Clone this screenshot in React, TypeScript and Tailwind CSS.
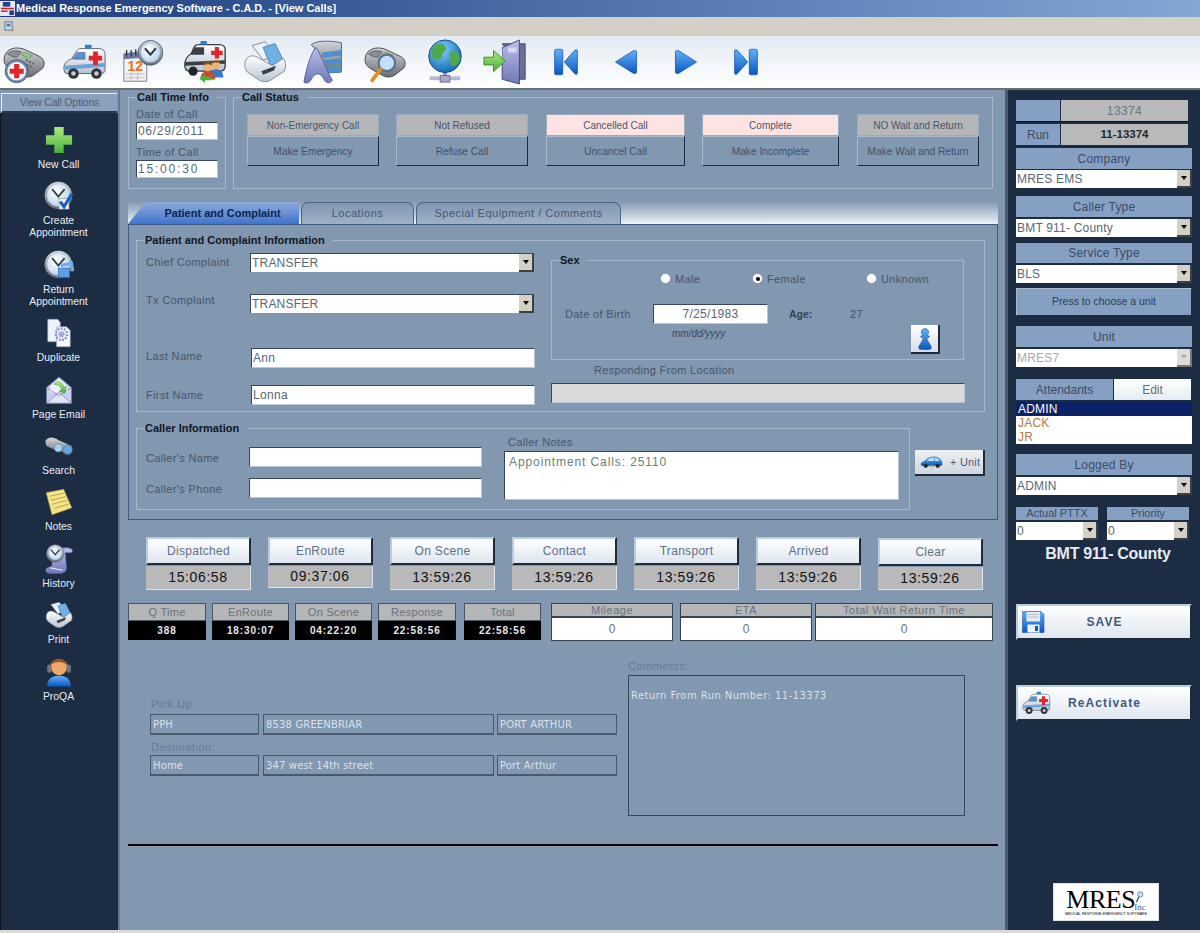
// App.tsx - MRES C.A.D. "View Calls" form
import React from 'react';

const SUNKEN = 'border border-t-[#39465a] border-l-[#39465a] border-r-[#b9c6d6] border-b-[#b9c6d6]';
const RAISED_DARK = 'border border-t-[#a9bacd] border-l-[#a9bacd] border-r-[#1d2a3c] border-b-[#1d2a3c]';
const RAISED_WHITE = 'border-2 border-t-[#b9cbe0] border-l-[#b9cbe0] border-r-[#1d2a3c] border-b-[#1d2a3c]';
const LABEL = 'text-[11px] leading-[12px] text-[#46566b] tracking-[0.35px] whitespace-nowrap';
const HEADER = 'bg-[#86a0c3] flex items-center justify-center text-[12px] text-[#3a4c66] tracking-[0.2px] border-b border-[#1b2c43]';

function Svg({ className, children }: { className?: string; children: React.ReactNode }) {
  return (
    <svg viewBox="0 0 48 48" className={className}>
      {children}
    </svg>
  );
}

function Defs() {
  return (
    <svg width="0" height="0" className="absolute">
      <defs>
        <linearGradient id="gBlue" x1="0" y1="0" x2="0" y2="1">
          <stop offset="0" stopColor="#63b1f5" />
          <stop offset="1" stopColor="#0a57c2" />
        </linearGradient>
        <linearGradient id="gGray" x1="0" y1="0" x2="0" y2="1">
          <stop offset="0" stopColor="#d2d5d9" />
          <stop offset="1" stopColor="#6a6e74" />
        </linearGradient>
        <linearGradient id="gWhite" x1="0" y1="0" x2="0" y2="1">
          <stop offset="0" stopColor="#ffffff" />
          <stop offset="1" stopColor="#b8c3d2" />
        </linearGradient>
        <linearGradient id="gGreen" x1="0" y1="0" x2="0" y2="1">
          <stop offset="0" stopColor="#a8ec7c" />
          <stop offset="1" stopColor="#4cae3c" />
        </linearGradient>
        <linearGradient id="gPurple" x1="0" y1="0" x2="0" y2="1">
          <stop offset="0" stopColor="#b9bfe8" />
          <stop offset="1" stopColor="#7078b8" />
        </linearGradient>
        <radialGradient id="gGlobe" cx="0.4" cy="0.3" r="0.8">
          <stop offset="0" stopColor="#7fd0f8" />
          <stop offset="1" stopColor="#0b5fb0" />
        </radialGradient>
        <radialGradient id="gFace" cx="0.4" cy="0.35" r="0.8">
          <stop offset="0" stopColor="#ffffff" />
          <stop offset="1" stopColor="#a9cdea" />
        </radialGradient>
      </defs>
    </svg>
  );
}

function Cross({ x, y, s = 1 }: { x: number; y: number; s?: number }) {
  return (
    <path
      transform={`translate(${x} ${y}) scale(${s})`}
      d="M-2.5 -7H2.5V-2.5H7V2.5H2.5V7H-2.5V2.5H-7V-2.5H-2.5Z"
      fill="#e0262a"
    />
  );
}

function PhoneBody() {
  return (
    <>
      <path d="M3 17C6 9 15 7 24 10L41 18C47 21 47 28 44 31L35 38C31 41 26 41 22 39L8 31C3 28 1 23 3 17Z" fill="url(#gGray)" stroke="#3e4248" />
      <path d="M6 15C10 11 16 11 21 13L16 19C12 18 9 18 6 15Z" fill="#8b8f95" stroke="#3e4248" strokeWidth="0.7" />
      <path d="M24 13L33 17L29 20L21 16Z" fill="#8fcf87" stroke="#4d6b4a" strokeWidth="0.6" />
      <path d="M26 22L37 27M23 25L34 30M20 28L31 33" stroke="#55595f" strokeWidth="2" strokeDasharray="2 2" />
    </>
  );
}

function PhoneCross({ className }: { className?: string }) {
  return (
    <Svg className={className}>
      <PhoneBody />
      <circle cx="16" cy="34" r="12.5" fill="#6f8fb4" stroke="#3f5a7c" />
      <circle cx="16" cy="34" r="10" fill="#f4f6f8" />
      <Cross x={16} y={34} s={1.1} />
    </Svg>
  );
}

function Ambulance({ className }: { className?: string }) {
  return (
    <Svg className={className}>
      <path d="M3 30C3 25 7 22 11 21L16 13C17 11 19 10 21 10H40C44 10 46 13 46 16V32C46 35 44 36 42 36H6C4 36 3 34 3 30Z" fill="url(#gWhite)" stroke="#5a6675" />
      <path d="M12 21L17 14H25V21Z" fill="#5b92cc" stroke="#3c5f86" strokeWidth="0.6" />
      <path d="M4 28L46 25V29L4 32Z" fill="#6aa3dc" />
      <rect x="25" y="6" width="7" height="4" rx="1" fill="#2f7fd8" />
      <Cross x={36} y={20} s={1} />
      <circle cx="13" cy="36" r="5.5" fill="#30343a" />
      <circle cx="13" cy="36" r="2.4" fill="#c8ccd2" />
      <circle cx="37" cy="36" r="5.5" fill="#30343a" />
      <circle cx="37" cy="36" r="2.4" fill="#c8ccd2" />
    </Svg>
  );
}

function CalendarClock({ className }: { className?: string }) {
  return (
    <Svg className={className}>
      <path d="M2 15L27 12V45H2Z" fill="#f3f2ee" stroke="#6f7aa8" />
      <path d="M2 15L27 12V19L2 21Z" fill="#6f7aa8" />
      <path d="M5 11V18M10 11V18M15 10V17M20 10V17" stroke="#33383f" strokeWidth="1.5" />
      <text x="6" y="34" fontSize="15" fontWeight="700" fill="#e8731c" fontFamily="Liberation Sans, sans-serif">12</text>
      <path d="M4 37H25M4 41H25M10 36V45M17 36V45" stroke="#a7aed0" strokeWidth="0.8" />
      <circle cx="31" cy="14" r="13.5" fill="url(#gGray)" stroke="#4a5f78" />
      <circle cx="31" cy="14" r="10.5" fill="url(#gFace)" />
      <path d="M25 9L31 16L37 9" fill="none" stroke="#343a42" strokeWidth="2.2" />
    </Svg>
  );
}

function Person({ x, y, c }: { x: number; y: number; c: string }) {
  return (
    <g transform={`translate(${x} ${y})`}>
      <path d="M-8 14C-8 7 -4 5 0 5S8 7 8 14Z" fill={c} />
      <circle cx="0" cy="0" r="5" fill="#efb47a" />
      <path d="M-5 -1C-5 -6 5 -6 5 -1C2 -3 -2 -3 -5 -1Z" fill="#7a4a1e" />
    </g>
  );
}

function AmbulancePeople({ className }: { className?: string }) {
  return (
    <Svg className={className}>
      <path d="M2 28C2 20 5 17 9 15L12 8C13 6 15 5 17 5H40C44 5 46 8 46 11V28C46 32 44 34 40 34H8C4 34 2 32 2 28Z" fill="url(#gWhite)" stroke="#3a4048" strokeWidth="1.5" />
      <path d="M8 16L13 8H23V16Z" fill="#3e3f45" />
      <rect x="19" y="1" width="7" height="4" rx="1" fill="#2f7fd8" />
      <Cross x={37} y={14} s={0.9} />
      <path d="M2 24L46 22V26L2 28Z" fill="#3a3d44" />
      <circle cx="11" cy="34" r="5" fill="#22252a" />
      <Person x={36} y={27} c="#3b78c8" />
      <Person x={27} y={29} c="#d2481f" />
      <path d="M18 42L24 37V40H31V44H24V47Z" fill="#48b23c" />
    </Svg>
  );
}

function Printer({ className }: { className?: string }) {
  return (
    <Svg className={className}>
      <path d="M10 6L24 2L38 16L22 22Z" fill="#eaf2fb" stroke="#7a8896" />
      <path d="M22 8L35 4L44 22L30 28Z" fill="#6fb1e6" stroke="#4c7fae" />
      <path d="M3 22C6 16 12 16 18 20L32 28L44 20C47 24 47 31 45 34L30 44C26 46 22 46 18 44L6 36C2 33 1 27 3 22Z" fill="url(#gWhite)" stroke="#7a8896" />
      <path d="M20 34L36 28L34 33L22 38Z" fill="#3b3f46" />
    </Svg>
  );
}

function Server({ className }: { className?: string }) {
  return (
    <Svg className={className}>
      <path d="M9 5C14 1 26 0 42 3V35L26 36L18 16Z" fill="url(#gGray)" stroke="#555c70" />
      <path d="M20 14L42 11V17L22 19ZM23 22L42 20V26L25 27ZM25 30L42 29V35L26 36Z" fill="#4d8fd0" />
      <path d="M14 8C20 16 25 32 32 44C29 48 25 47 23 43C21 39 19 37 16 37C13 37 10 40 9 43C7 47 3 48 1 46C4 30 8 16 14 8Z" fill="url(#gPurple)" stroke="#555c90" />
    </Svg>
  );
}

function PhoneSearch({ className }: { className?: string }) {
  return (
    <Svg className={className}>
      <PhoneBody />
      <circle cx="26" cy="25" r="9" fill="#bfe0f6" stroke="#5d6f84" strokeWidth="2.4" />
      <path d="M19 32L10 44" stroke="#e78a1e" strokeWidth="4" strokeLinecap="round" />
    </Svg>
  );
}

function Globe({ className }: { className?: string }) {
  return (
    <Svg className={className}>
      <path d="M24 32V40" stroke="#8e93b0" strokeWidth="4" />
      <path d="M8 41H40" stroke="#b5b9d2" strokeWidth="4" />
      <rect x="19" y="38" width="10" height="7" fill="#a5a9c6" stroke="#6d7190" />
      <circle cx="24" cy="18" r="17" fill="url(#gGlobe)" stroke="#0b4a87" />
      <path d="M14 6C18 4 24 5 25 9C26 13 21 13 21 17C21 21 16 23 12 20C9 18 9 10 14 6Z" fill="#4ea94a" />
      <path d="M30 14C34 12 40 15 40 20C40 25 34 30 31 28C28 26 31 22 29 19C28 17 28 15 30 14Z" fill="#4ea94a" />
    </Svg>
  );
}

function DoorArrow({ className }: { className?: string }) {
  return (
    <Svg className={className}>
      <path d="M20 5H44V42H38V10H24Z" fill="#6a6f96" stroke="#454a70" />
      <path d="M20 9L38 1V47L20 42Z" fill="url(#gPurple)" stroke="#454a70" />
      <rect x="26" y="9" width="9" height="5" fill="#d6dbf2" />
      <path d="M20 10L10 12V24L20 22Z" fill="#dbe9f6" />
      <path d="M1 19H11V12L23 23L11 34V27H1Z" fill="url(#gGreen)" stroke="#3f8a30" />
    </Svg>
  );
}

function Nav({ kind, className }: { kind: 'first' | 'prev' | 'next' | 'last'; className?: string }) {
  const d = {
    first: 'M2 5C2 3 12 3 12 5V43C12 45 2 45 2 43ZM14 24L27 5C28 4 30 4 30 6V42C30 44 28 44 27 43Z',
    prev: 'M3 24L25 6C27 5 29 6 29 8V40C29 42 27 43 25 42Z',
    next: 'M29 24L7 6C5 5 3 6 3 8V40C3 42 5 43 7 42Z',
    last: 'M30 5C30 3 20 3 20 5V43C20 45 30 45 30 43ZM18 24L5 5C4 4 2 4 2 6V42C2 44 4 44 5 43Z',
  }[kind];
  return (
    <svg viewBox="0 0 32 48" preserveAspectRatio="none" className={className}>
      <path d={d} fill="url(#gBlue)" stroke="#0b4ea8" strokeWidth="1" />
    </svg>
  );
}

function ClockBadge({ className, mode }: { className?: string; mode: 'check' | 'return' }) {
  return (
    <Svg className={className}>
      <circle cx="23" cy="23" r="22" fill="url(#gGray)" />
      <circle cx="23" cy="23" r="18" fill="url(#gFace)" />
      <path d="M13 13L23 25L33 13" fill="none" stroke="#3a4048" strokeWidth="3" />
      {mode === 'check' ? (
        <>
          <rect x="24" y="28" width="16" height="17" fill="#f5f7fb" stroke="#7b8aa8" />
          <path d="M26 33L32 41L45 20" fill="none" stroke="#1a5cc0" strokeWidth="5" />
        </>
      ) : (
        <>
          <rect x="23" y="29" width="18" height="15" fill="#5a9ee8" stroke="#2a62b0" />
          <path d="M27 25L44 21L46 34" fill="none" stroke="#6aaef0" strokeWidth="5" />
        </>
      )}
    </Svg>
  );
}

function Duplicate({ className }: { className?: string }) {
  return (
    <Svg className={className}>
      <path d="M6 2H22L26 7V38H6Z" fill="#eef2fb" stroke="#8e9ab8" />
      <path d="M20 14H36L42 20V46H20Z" fill="#f8faff" stroke="#8e9ab8" />
      <circle cx="28" cy="26" r="9" fill="none" stroke="#8d92d0" strokeWidth="4" strokeDasharray="3 2" />
      <circle cx="28" cy="26" r="5" fill="#a8acdc" />
    </Svg>
  );
}

function Mail({ className }: { className?: string }) {
  return (
    <Svg className={className}>
      <path d="M4 20L24 3L44 20V45H4Z" fill="#c9cdf0" stroke="#6f74b0" />
      <path d="M10 18L24 6L38 18V28H10Z" fill="#eef1fb" />
      <path d="M16 15C20 8 30 10 32 20L36 18L34 29L24 26L28 23C27 17 21 15 16 15Z" fill="url(#gGreen)" stroke="#3f8a30" strokeWidth="0.7" />
      <path d="M4 45L24 28L44 45Z" fill="#e2e5f8" stroke="#6f74b0" />
      <path d="M4 20L24 33L44 20" fill="none" stroke="#6f74b0" />
    </Svg>
  );
}

function Binoculars({ className }: { className?: string }) {
  return (
    <Svg className={className}>
      <path d="M2 16C8 8 16 10 22 14L44 24C47 30 45 38 38 38C33 38 30 34 28 31L24 28C20 30 16 30 13 28L4 24Z" fill="url(#gGray)" />
      <circle cx="23" cy="27" r="6.5" fill="#9dd0f6" stroke="#65727f" />
      <circle cx="38" cy="30" r="7" fill="#5aa8ec" stroke="#65727f" />
    </Svg>
  );
}

function Notes({ className }: { className?: string }) {
  return (
    <Svg className={className}>
      <path d="M2 8L32 2L46 34L12 46Z" fill="#f4e58c" stroke="#a8953a" />
      <path d="M8 14L33 9M10 21L36 15M12 28L39 21M15 35L42 27" stroke="#b9a447" strokeWidth="1.6" />
    </Svg>
  );
}

function History({ className }: { className?: string }) {
  return (
    <Svg className={className}>
      <path d="M16 14C20 6 38 4 44 8C47 10 45 15 42 14L34 14L36 38C36 44 32 47 26 47H8C3 47 1 41 5 38L12 36Z" fill="url(#gPurple)" stroke="#5c60a0" />
      <path d="M9 38L30 42" stroke="#eef0fb" strokeWidth="2" />
      <circle cx="18" cy="15" r="14" fill="url(#gGray)" stroke="#5b6a80" />
      <circle cx="18" cy="15" r="10.5" fill="url(#gFace)" />
      <path d="M11 9L18 17L25 9" fill="none" stroke="#3a4048" strokeWidth="2.4" />
    </Svg>
  );
}

function Headset({ className }: { className?: string }) {
  return (
    <Svg className={className}>
      <path d="M5 47C5 34 14 30 24 30S43 34 43 47Z" fill="url(#gBlue)" />
      <circle cx="24" cy="16" r="13" fill="#f0a768" />
      <path d="M10 14C10 0 38 0 38 14C32 6 16 6 10 14Z" fill="#8a5a28" />
      <rect x="5" y="12" width="7" height="13" rx="3" fill="#70747c" />
      <rect x="36" y="12" width="7" height="13" rx="3" fill="#70747c" />
    </Svg>
  );
}

function Floppy({ className }: { className?: string }) {
  return (
    <Svg className={className}>
      <path d="M3 3H40L46 9V45H3Z" fill="url(#gBlue)" stroke="#0d3f8a" />
      <rect x="11" y="4" width="27" height="19" fill="#e6e9ef" />
      <path d="M14 9H35M14 14H35" stroke="#aab1bd" strokeWidth="1.5" />
      <rect x="13" y="29" width="24" height="16" fill="#eef0f4" />
      <rect x="28" y="32" width="6" height="10" fill="#1c56ad" />
    </Svg>
  );
}

function Car({ className }: { className?: string }) {
  return (
    <svg viewBox="0 0 48 28" className={className}>
      <path d="M2 19C2 15 6 13 10 12C15 6 20 3 29 3C38 3 44 8 46 15C47 19 46 22 43 22H5C3 22 2 21 2 19Z" fill="url(#gBlue)" stroke="#0b4ea8" strokeWidth="0.7" />
      <path d="M14 12C18 7 23 5 29 5V12ZM31 5C36 5 39 8 41 12H31Z" fill="#bfe0f8" />
      <circle cx="12" cy="22" r="4.5" fill="#24282e" />
      <circle cx="37" cy="22" r="4.5" fill="#24282e" />
      <rect x="22" y="20" width="4" height="6" fill="#e2a21c" />
    </svg>
  );
}

function Pawn({ className }: { className?: string }) {
  return (
    <svg viewBox="0 0 24 36" className={className}>
      <path d="M12 1C16 1 18 4 18 7C18 10 16 11 15 12L19 13V15L15 16C16 22 20 26 22 30V34C18 36 6 36 2 34V30C4 26 8 22 9 16L5 15V13L9 12C8 11 6 10 6 7C6 4 8 1 12 1Z" fill="url(#gBlue)" stroke="#0b3f8e" strokeWidth="0.8" />
    </svg>
  );
}

function Arrow({ dim }: { dim?: boolean }) {
  return (
    <span className={`flex w-[15px] h-full shrink-0 items-center justify-center bg-[#d4d0c8] border-r-2 border-b-2 border-[#3c3f44] ${dim ? 'opacity-70' : ''}`}>
      <span className={`w-0 h-0 border-x-[3px] border-x-transparent border-t-[4px] ${dim ? 'border-t-[#8a8a8a]' : 'border-t-black'}`} />
    </span>
  );
}

function Dropdown({ value, className, dim }: { value: string; className?: string; dim?: boolean }) {
  return (
    <div className={`flex items-center bg-white h-[18px] ${className ?? ''}`}>
      <span className={`flex-1 pl-[1px] text-[12px] tracking-[0.2px] whitespace-nowrap overflow-hidden ${dim ? 'text-[#a3a9b2]' : 'text-[#566778]'}`}>{value}</span>
      <Arrow dim={dim} />
    </div>
  );
}

function Field({ value, className }: { value?: string; className?: string }) {
  return (
    <div className={`bg-white ${SUNKEN} flex items-center px-[1px] text-[12px] tracking-[0.3px] text-[#566778] whitespace-nowrap ${className ?? ''}`}>
      {value}
    </div>
  );
}

function Group({ title, className, children }: { title: string; className?: string; children: React.ReactNode }) {
  return (
    <fieldset className={`border border-[#a7b7ca] shrink-0 ${className ?? ''}`}>
      <legend className="ml-[8px] pr-[8px] text-[11px] leading-[12px] font-bold text-[#10161f] whitespace-nowrap">{title}</legend>
      {children}
    </fieldset>
  );
}

function StatusPair({ label, action, pink, className }: { label: string; action: string; pink?: boolean; className?: string }) {
  return (
    <div className={`flex flex-col shrink-0 ${className ?? ''}`}>
      <div className={`h-[22px] flex items-center justify-center text-[10px] text-[#47556a] border border-[#9aabbf] whitespace-nowrap ${pink ? 'bg-[#fde4e2]' : 'bg-[#b5b6b8]'}`}>{label}</div>
      <div className={`h-[30px] pt-[2px] flex items-center justify-center text-[10.2px] text-[#3f526d] bg-[#8297b0] ${RAISED_DARK} whitespace-nowrap`}>{action}</div>
    </div>
  );
}

function SideItem({ label, children }: { label: React.ReactNode; children: React.ReactNode }) {
  return (
    <div className="flex flex-col items-center">
      <div className="h-[30px] flex items-center justify-center">{children}</div>
      <div className="mt-[4px] text-center text-[10.4px] leading-[12px] text-[#e9edf2]">{label}</div>
    </div>
  );
}

function Clock({ label, time, className, timeClass }: { label: string; time: string; className?: string; timeClass?: string }) {
  return (
    <div className={`w-[105px] flex flex-col shrink-0 ${className ?? ''}`}>
      <div className={`h-[28px] flex items-center justify-center bg-gradient-to-b from-white to-[#dfe6ef] text-[12px] text-[#5d7088] tracking-[0.3px] ${RAISED_WHITE}`}>{label}</div>
      <div className={`mt-[1px] flex items-center justify-center bg-[#b9b9b9] border-r border-b border-[#dbe3ec] text-[14px] tracking-[0.6px] text-[#111] ${timeClass ?? 'h-[24px]'}`}>{time}</div>
    </div>
  );
}

function Elapsed({ label, value, className }: { label: string; value: string; className?: string }) {
  return (
    <div className={`flex flex-col shrink-0 ${className ?? ''}`}>
      <div className="h-[18px] flex items-center justify-center bg-[#b5b6b8] border border-[#4a5463] text-[11px] text-[#69727e] tracking-[0.3px]">{label}</div>
      <div className="h-[19px] flex items-center justify-center bg-black text-[10px] font-bold text-[#e8e8e8] tracking-[0.9px]">{value}</div>
    </div>
  );
}

function Stat({ label, value, className }: { label: string; value: string; className?: string }) {
  return (
    <div className={`flex flex-col shrink-0 ${className ?? ''}`}>
      <div className="h-[15px] flex items-center justify-center bg-[#b5b6b8] border border-b-2 border-[#39424f] text-[11px] text-[#69727e] tracking-[0.5px]">{label}</div>
      <div className="h-[23px] flex items-center justify-center bg-white border border-t-0 border-[#39424f] text-[12px] text-[#69727e]">{value}</div>
    </div>
  );
}

function Address({ value, className }: { value: string; className?: string }) {
  return (
    <div className={`h-[21px] flex items-center px-[2px] border border-[#4a5a6e] border-b-2 text-[10px] tracking-[0.15px] text-[#d9e1ea] font-['DejaVu_Sans',sans-serif] whitespace-nowrap ${className ?? ''}`}>
      {value}
    </div>
  );
}

function Radio({ label, checked, className }: { label: string; checked?: boolean; className?: string }) {
  return (
    <div className={`flex items-center gap-[4px] shrink-0 ${className ?? ''}`}>
      <span className="w-[11px] h-[11px] rounded-full bg-white border border-[#8a97a8] flex items-center justify-center">
        {checked && <span className="w-[4px] h-[4px] rounded-full bg-black" />}
      </span>
      <span className={LABEL}>{label}</span>
    </div>
  );
}

function WideButton({ icon, label, className }: { icon: React.ReactNode; label: string; className?: string }) {
  return (
    <div className={`w-[176px] h-[36px] flex items-center bg-gradient-to-b from-white to-[#dfe6ef] ${RAISED_WHITE} ${className ?? ''}`}>
      <div className="w-[30px] flex justify-start ml-[3px] shrink-0">{icon}</div>
      <span className="flex-1 pr-[32px] text-center text-[12px] font-bold tracking-[1.1px] text-[#3f5a7c]">{label}</span>
    </div>
  );
}

export default function App() {
  return (
    <div className="w-[1200px] h-[933px] overflow-hidden flex flex-col bg-[#8297b0] font-['Liberation_Sans',Arial,sans-serif]">
      <Defs />

      {/* title bar */}
      <div className="h-[17px] shrink-0 flex items-center bg-gradient-to-r from-[#1d3b7c] via-[#4f74ad] to-[#83a6d3]">
        <svg viewBox="0 0 16 16" className="w-[15px] h-[15px] shrink-0">
          <rect width="16" height="16" fill="#e8e8f2" />
          <rect x="3" y="1" width="8" height="5" fill="#2b3f8a" />
          <path d="M1 8H15M1 11H8" stroke="#c22" strokeWidth="1.5" />
          <rect x="10" y="10" width="5" height="5" fill="#2b3f8a" />
        </svg>
        <span className="ml-[1px] text-[11px] font-bold tracking-[-0.03px] text-white whitespace-nowrap">Medical Response Emergency Software - C.A.D. - [View Calls]</span>
      </div>

      {/* menu strip */}
      <div className="h-[19px] shrink-0 flex items-center pl-[4px] bg-[#d4d0c8]">
        <svg viewBox="0 0 12 12" className="w-[11px] h-[11px]">
          <rect x="1" y="1" width="8" height="9" fill="#c6d8ee" stroke="#5e7696" />
          <rect x="3" y="3" width="4" height="3" fill="#5e7696" />
          <rect x="8" y="9" width="3" height="2" fill="#e0922a" />
        </svg>
      </div>

      {/* toolbar */}
      <div className="h-[52px] shrink-0 flex items-center pl-[1px] gap-[14.2px] bg-gradient-to-b from-[#e4eaf3] to-white">
        <PhoneCross className="w-[46px] h-[44px] shrink-0" />
        <Ambulance className="w-[46px] h-[46px] shrink-0" />
        <CalendarClock className="w-[46px] h-[44px] shrink-0" />
        <AmbulancePeople className="w-[46px] h-[44px] shrink-0" />
        <Printer className="w-[46px] h-[44px] shrink-0" />
        <Server className="w-[46px] h-[44px] shrink-0" />
        <PhoneSearch className="w-[46px] h-[44px] shrink-0" />
        <Globe className="w-[46px] h-[46px] shrink-0" />
        <DoorArrow className="w-[46px] h-[48px] shrink-0" />
        <Nav kind="first" className="w-[26px] h-[30px] mx-[10px] shrink-0" />
        <Nav kind="prev" className="w-[26px] h-[30px] mx-[10px] shrink-0" />
        <Nav kind="next" className="w-[26px] h-[30px] mx-[10px] shrink-0" />
        <Nav kind="last" className="w-[26px] h-[30px] mx-[10px] shrink-0" />
      </div>
      <div className="h-[2px] shrink-0 bg-[#6a6f76]" />

      {/* body */}
      <div className="h-[840px] shrink-0 flex">
        {/* left options */}
        <div className="w-[120px] shrink-0 flex flex-col border-r-2 border-[#6b7888]">
          <div className="pt-[3px]">
            <div className="ml-[1px] w-[116px] h-[20px] flex items-center justify-center bg-[#8ba0bc] border-t border-l border-[#e9eef4] border-b-2 border-b-[#2a3648] text-[10.5px] tracking-[-0.2px] text-[#4f5f73]">View Call Options</div>
          </div>
          <div className="flex-1 bg-[#1b2c43] border-l border-[#0d141e] pt-[12px] pr-[2px] flex flex-col gap-[10.4px]">
            <SideItem label="New Call">
              <svg viewBox="0 0 30 30" className="w-[28px] h-[28px]">
                <path d="M10 1H20V10H29V20H20V29H10V20H1V10H10Z" fill="url(#gGreen)" />
              </svg>
            </SideItem>
            <SideItem label={<>Create<br />Appointment</>}>
              <ClockBadge mode="check" className="w-[30px] h-[30px]" />
            </SideItem>
            <SideItem label={<>Return<br />Appointment</>}>
              <ClockBadge mode="return" className="w-[30px] h-[30px]" />
            </SideItem>
            <SideItem label="Duplicate">
              <Duplicate className="w-[30px] h-[30px]" />
            </SideItem>
            <SideItem label="Page Email">
              <Mail className="w-[30px] h-[30px]" />
            </SideItem>
            <SideItem label="Search">
              <Binoculars className="w-[30px] h-[30px]" />
            </SideItem>
            <SideItem label="Notes">
              <Notes className="w-[30px] h-[28px]" />
            </SideItem>
            <SideItem label="History">
              <History className="w-[30px] h-[30px]" />
            </SideItem>
            <SideItem label="Print">
              <Printer className="w-[30px] h-[28px]" />
            </SideItem>
            <SideItem label="ProQA">
              <Headset className="w-[30px] h-[30px]" />
            </SideItem>
          </div>
        </div>

        {/* main form */}
        <div className="w-[885px] shrink-0 pl-[8px] pt-[1px] flex flex-col">
          <div className="flex">
            <Group title="Call Time Info" className="w-[98px] h-[98px]">
              <div className="pl-[7px] flex flex-col items-start">
                <div className={`mt-[5px] ${LABEL}`}>Date of Call</div>
                <Field value="06/29/2011" className="mt-[2px] w-[82px] h-[18px] !tracking-[0.7px]" />
                <div className={`mt-[6px] ${LABEL}`}>Time of Call</div>
                <Field value="15:00:30" className="mt-[2px] w-[82px] h-[18px] !tracking-[1.8px]" />
              </div>
            </Group>
            <Group title="Call Status" className="ml-[7px] w-[760px] h-[98px]">
              <div className="pl-[13px] pt-[11px] flex">
                <StatusPair label="Non-Emergency Call" action="Make Emergency" className="w-[132px]" />
                <StatusPair label="Not Refused" action="Refuse Call" className="w-[132px] ml-[17px]" />
                <StatusPair label="Cancelled Call" action="Uncancel Call" pink className="w-[139px] ml-[18px]" />
                <StatusPair label="Complete" action="Make Incomplete" pink className="w-[137px] ml-[17px]" />
                <StatusPair label="NO Wait and Return" action="Make Wait and Return" className="w-[122px] ml-[18px]" />
              </div>
            </Group>
          </div>

          {/* tabs */}
          <div className="mt-[12px] w-[870px] h-[23px] shrink-0 flex items-end bg-gradient-to-b from-[#8297b0] to-[#eef2f6]">
            <div className="w-[171px] h-[22px] flex items-center justify-center pl-[18px] bg-gradient-to-b from-[#8fabd8] to-[#3f74d0] text-[11px] font-bold text-[#0e2348] [clip-path:polygon(0_100%,10%_5%,13%_0,99%_0,100%_8%,100%_100%)]">Patient and Complaint</div>
            <div className="ml-[2px] w-[113px] h-[22px] flex items-center justify-center rounded-t-[7px] border border-b-0 border-[#4b6487] bg-gradient-to-b from-[#8197b3] to-[#a0b1c6] text-[11px] tracking-[0.5px] text-[#47586f]">Locations</div>
            <div className="ml-[2px] w-[205px] h-[22px] flex items-center justify-center rounded-t-[7px] border border-b-0 border-[#4b6487] bg-gradient-to-b from-[#8197b3] to-[#a0b1c6] text-[11px] tracking-[0.5px] text-[#47586f]">Special Equipment / Comments</div>
          </div>

          {/* tab body */}
          <div className="w-[870px] h-[296px] shrink-0 border border-[#3d5a80] pl-[7px] pt-[9px]">
            <Group title="Patient and Complaint Information" className="w-[849px] h-[178px]">
              <div className="flex">
                <div className="pl-[9px] w-[398px] shrink-0 flex flex-col">
                  <div className="mt-[7px] h-[19px] flex items-center">
                    <div className={`w-[104px] shrink-0 pb-[1px] ${LABEL}`}>Chief Complaint</div>
                    <Dropdown value="TRANSFER" className="w-[284px] !h-[19px] border-t border-l border-[#39465a]" />
                  </div>
                  <div className="mt-[22px] h-[19px] flex items-center">
                    <div className={`w-[104px] shrink-0 pb-[7px] ${LABEL}`}>Tx Complaint</div>
                    <Dropdown value="TRANSFER" className="w-[284px] !h-[19px] border-t border-l border-[#39465a]" />
                  </div>
                  <div className="mt-[35px] h-[20px] flex items-center">
                    <div className={`w-[105px] shrink-0 pb-[4px] ${LABEL}`}>Last Name</div>
                    <Field value="Ann" className="w-[284px] h-[20px]" />
                  </div>
                  <div className="mt-[17px] h-[20px] flex items-center">
                    <div className={`w-[105px] shrink-0 ${LABEL}`}>First Name</div>
                    <Field value="Lonna" className="w-[284px] h-[20px]" />
                  </div>
                </div>
                <div className="ml-[16px] flex flex-col">
                  <Group title="Sex" className="mt-[8px] w-[413px] h-[106px]">
                    <div className="mt-[6px] h-[13px] pl-[108px] flex items-center">
                      <Radio label="Male" className="w-[92px]" />
                      <Radio label="Female" checked className="w-[114px]" />
                      <Radio label="Unknown" />
                    </div>
                    <div className="mt-[19px] h-[20px] pl-[13px] flex items-center">
                      <div className={`w-[88px] shrink-0 ${LABEL}`}>Date of Birth</div>
                      <Field value="7/25/1983" className="w-[115px] h-[20px] justify-center" />
                      <div className="ml-[21px] pt-[2px] w-[61px] text-[10.5px] font-bold text-[#33435a]">Age:</div>
                      <div className={LABEL}>27</div>
                    </div>
                    <div className="mt-[1px] flex items-start">
                      <div className="ml-[120px] mt-[3px] text-[10px] italic leading-[12px] text-[#3a475a]">mm/dd/yyyy</div>
                      <div className="ml-[186px] w-[29px] h-[29px] flex items-center justify-center bg-gradient-to-b from-white to-[#d8dfe8] border-r-2 border-b-2 border-[#1d2a3c]">
                        <Pawn className="w-[16px] h-[22px]" />
                      </div>
                    </div>
                  </Group>
                  <div className={`mt-[4px] ml-[43px] ${LABEL}`}>Responding From Location</div>
                  <div className={`mt-[7px] w-[414px] h-[20px] bg-[#dadada] ${SUNKEN}`} />
                </div>
              </div>
            </Group>

            <div className="mt-[10px] flex items-start">
              <Group title="Caller Information" className="w-[774px] h-[88px]">
                <div className="flex">
                  <div className="pl-[9px] flex flex-col">
                    <div className="mt-[13px] h-[20px] flex items-center">
                      <div className={`w-[103px] shrink-0 pt-[2px] ${LABEL}`}>Caller's Name</div>
                      <Field className="w-[233px] h-[20px]" />
                    </div>
                    <div className="mt-[11px] h-[20px] flex items-center">
                      <div className={`w-[103px] shrink-0 pt-[2px] ${LABEL}`}>Caller's Phone</div>
                      <Field className="w-[233px] h-[20px]" />
                    </div>
                  </div>
                  <div className="ml-[22px] flex flex-col">
                    <div className={`mt-[2px] pl-[4px] ${LABEL}`}>Caller Notes</div>
                    <div className={`mt-[3px] w-[395px] h-[49px] bg-white px-[4px] pt-[1px] text-[12px] tracking-[0.9px] text-[#6b8079] ${SUNKEN}`}>Appointment Calls: 25110</div>
                  </div>
                </div>
              </Group>
              <div className="ml-[5px] mt-[28px] w-[70px] h-[26px] flex items-center bg-gradient-to-b from-[#eef1f5] to-[#cfd6df] border-r-2 border-b-2 border-[#1d2a3c] text-[11px] text-[#4d5f75] tracking-[0.2px]">
                <Car className="ml-[5px] w-[23px] h-[14px]" />
                <span className="ml-[7px] whitespace-nowrap">+ Unit</span>
              </div>
            </div>
          </div>

          {/* dispatch clocks */}
          <div className="mt-[17px] ml-[18px] flex gap-[17px]">
            <Clock label="Dispatched" time="15:06:58" />
            <Clock label="EnRoute" time="09:37:06" timeClass="h-[22px]" />
            <Clock label="On Scene" time="13:59:26" />
            <Clock label="Contact" time="13:59:26" />
            <Clock label="Transport" time="13:59:26" />
            <Clock label="Arrived" time="13:59:26" />
            <Clock label="Clear" time="13:59:26" className="pt-[1px]" timeClass="h-[23px]" />
          </div>

          {/* elapsed */}
          <div className="mt-[13px] flex">
            <Elapsed label="Q Time" value="388" className="w-[78px]" />
            <Elapsed label="EnRoute" value="18:30:07" className="w-[77px] ml-[6px]" />
            <Elapsed label="On Scene" value="04:22:20" className="w-[77px] ml-[6px]" />
            <Elapsed label="Response" value="22:58:56" className="w-[78px] ml-[6px]" />
            <Elapsed label="Total" value="22:58:56" className="w-[77px] ml-[8px]" />
            <Stat label="Mileage" value="0" className="w-[122px] ml-[10px]" />
            <Stat label="ETA" value="0" className="w-[132px] ml-[7px]" />
            <Stat label="Total Wait Return Time" value="0" className="w-[178px] ml-[3px]" />
          </div>

          {/* locations + comments */}
          <div className="mt-[19px] flex">
            <div className="w-[500px] shrink-0 pl-[22px] pt-[38px] flex flex-col">
              <div className="ml-[1px] text-[11px] leading-[12px] tracking-[0.5px] text-[#677b94]">Pick Up:</div>
              <div className="mt-[4px] flex">
                <Address value="PPH" className="w-[109px]" />
                <Address value="8538 GREENBRIAR" className="w-[231px] ml-[4px]" />
                <Address value="PORT ARTHUR" className="w-[120px] ml-[3px]" />
              </div>
              <div className="mt-[6px] ml-[1px] text-[11px] leading-[12px] tracking-[0.5px] text-[#677b94]">Destination:</div>
              <div className="mt-[2px] flex">
                <Address value="Home" className="w-[109px]" />
                <Address value="347 west 14th street" className="w-[231px] ml-[4px]" />
                <Address value="Port Arthur" className="w-[120px] ml-[3px]" />
              </div>
            </div>
            <div className="flex flex-col">
              <div className="text-[11px] leading-[12px] tracking-[0.5px] text-[#677b94]">Comments:</div>
              <div className="mt-[3px] w-[337px] h-[141px] border border-[#39465a] px-[2px] pt-[12px] text-[10px] tracking-[0.45px] text-[#d9e1ea] font-['DejaVu_Sans',sans-serif]">Return From Run Number: 11-13373</div>
            </div>
          </div>

          <div className="mt-[28px] w-[870px] h-[2px] shrink-0 bg-black" />
        </div>

        {/* right panel */}
        <div className="flex-1 min-w-0 bg-[#1b2c43] border-l-[3px] border-[#4e5b6c] pl-[8px] pt-[10px] flex flex-col">
          <div className="flex h-[22px]">
            <div className="w-[44px] bg-[#86a0c3] border-b border-[#0d141e]" />
            <div className="ml-[1px] w-[127px] flex items-center justify-center bg-[#b9b9b9] border-b border-[#0d141e] text-[12px] tracking-[0.4px] text-[#6a7583]">13374</div>
          </div>
          <div className="flex h-[21px] mt-[2px]">
            <div className="w-[44px] flex items-center justify-center bg-[#86a0c3] text-[12px] text-[#3a4c66]">Run</div>
            <div className="ml-[1px] w-[127px] flex items-center justify-center bg-[#b9b9b9] text-[11.5px] font-bold text-[#22272e]">11-13374</div>
          </div>
          <div className={`mt-[3px] w-[176px] h-[22px] ${HEADER}`}>Company</div>
          <Dropdown value="MRES EMS" className="w-[176px]" />
          <div className={`mt-[8px] w-[176px] h-[22px] ${HEADER}`}>Caller Type</div>
          <Dropdown value="BMT 911- County" className="mt-[1px] w-[176px]" />
          <div className={`mt-[6px] w-[176px] h-[21px] ${HEADER}`}>Service Type</div>
          <Dropdown value="BLS" className="mt-[1px] w-[176px]" />
          <div className={`mt-[5px] w-[176px] h-[28px] flex items-center justify-center bg-[#86a0c3] text-[10.5px] text-[#2e3d52] ${RAISED_DARK}`}>Press to choose a unit</div>
          <div className={`mt-[10px] w-[176px] h-[22px] ${HEADER}`}>Unit</div>
          <Dropdown value="MRES7" dim className="mt-[1px] w-[176px]" />
          <div className="mt-[12px] flex h-[21px] w-[175px]">
            <div className="w-[97px] flex items-center justify-center bg-[#86a0c3] text-[12px] text-[#3a4c66]">Attendants</div>
            <div className="ml-[1px] flex-1 flex items-center justify-center bg-gradient-to-b from-white to-[#e6ecf3] text-[12px] text-[#5d7088]">Edit</div>
          </div>
          <div className="mt-[2px] w-[176px] h-[42px] bg-white text-[12px] leading-[14px] tracking-[0.2px] text-[#b17a45]">
            <div className="bg-[#0c2267] text-white pl-[2px]">ADMIN</div>
            <div className="pl-[2px]">JACK</div>
            <div className="pl-[2px]">JR</div>
          </div>
          <div className={`mt-[10px] w-[176px] h-[22px] ${HEADER}`}>Logged By</div>
          <Dropdown value="ADMIN" className="mt-[1px] w-[176px]" />
          <div className="mt-[12px] flex gap-[9px]">
            <div className="w-[82px] h-[13px] flex items-center justify-center bg-[#86a0c3] text-[11px] text-[#3a4c66]">Actual PTTX</div>
            <div className="w-[82px] h-[13px] flex items-center justify-center bg-[#86a0c3] text-[11px] text-[#3a4c66]">Priority</div>
          </div>
          <div className="mt-[2px] flex gap-[9px]">
            <Dropdown value="0" className="w-[82px]" />
            <Dropdown value="0" className="w-[82px]" />
          </div>
          <div className="mt-[6px] w-[184px] text-center text-[16px] leading-[16px] font-bold text-[#e6eaf0] -tracking-[0.3px]">BMT 911- County</div>
          <WideButton label="SAVE" className="mt-[42px]" icon={<Floppy className="w-[24px] h-[26px]" />} />
          <WideButton label="ReActivate" className="mt-[45px]" icon={<Ambulance className="w-[30px] h-[30px]" />} />
          <div className="mt-[162px] ml-[37px] w-[106px] h-[38px] shrink-0 bg-white flex flex-col items-center justify-center border border-[#dfe3e8]">
            <div className="flex items-end leading-none">
              <span className="font-['Liberation_Serif',serif] text-[26px] leading-[25px] text-black -tracking-[0.5px]">MRES</span>
              <div className="flex flex-col items-center -ml-[1px]">
                <svg viewBox="0 0 12 16" className="w-[9px] h-[12px]">
                  <circle cx="7" cy="4.5" r="3.5" fill="#cfe0f2" stroke="#4a6aa0" />
                  <path d="M5 8L2 15" stroke="#303a5a" strokeWidth="1.5" />
                </svg>
                <span className="font-['Liberation_Serif',serif] text-[9px] leading-[9px] text-[#4a5a9a]">Inc</span>
              </div>
            </div>
            <div className="text-[3.6px] leading-[5px] text-black whitespace-nowrap">MEDICAL RESPONSE EMERGENCY SOFTWARE</div>
          </div>
        </div>
      </div>

      <div className="flex-1 bg-[#dcdad4]" />
    </div>
  );
}
